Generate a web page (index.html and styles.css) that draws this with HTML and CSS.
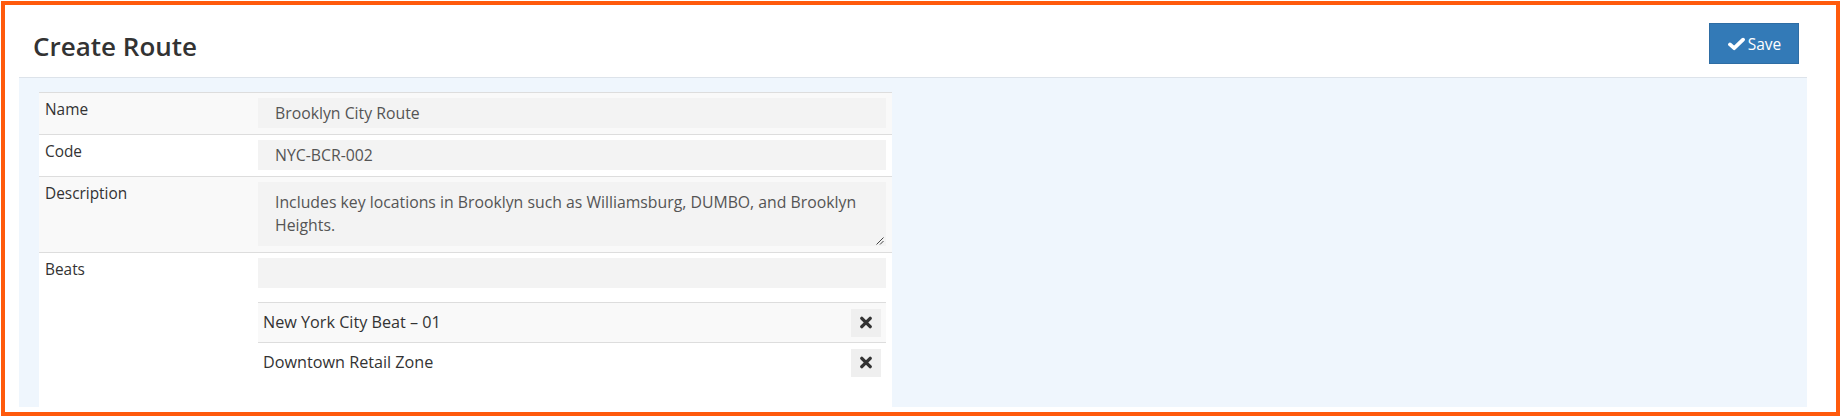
FILE: index.html
```html
<!DOCTYPE html>
<html lang="en">
<head>
<meta charset="utf-8">
<title>Create Route</title>
<link rel="stylesheet" href="styles.css">
</head>
<body>
<div class="frame">
  <div class="header">
    <h1 class="title">Create Route</h1>
    <button class="btn-save" type="button">
      <svg class="ico-check" viewBox="0 0 20 15" width="19" height="14" aria-hidden="true">
        <polyline points="3,8 7.5,12 17,2.8" fill="none" stroke="#fff" stroke-width="4" stroke-linecap="round" stroke-linejoin="round"/>
      </svg>
      <span>Save</span>
    </button>
  </div>
  <div class="panel">
    <div class="form">
      <div class="row striped">
        <div class="label">Name</div>
        <div class="field"><div class="input">Brooklyn City Route</div></div>
      </div>
      <div class="row">
        <div class="label">Code</div>
        <div class="field"><div class="input">NYC-BCR-002</div></div>
      </div>
      <div class="row striped">
        <div class="label">Description</div>
        <div class="field">
          <div class="textarea">Includes key locations in Brooklyn such as Williamsburg, DUMBO, and Brooklyn Heights.
            <svg class="grip" viewBox="0 0 9 9" width="9" height="9" aria-hidden="true">
              <line x1="8.5" y1="1.5" x2="1.5" y2="8.5" stroke="#444" stroke-width="1"/>
              <line x1="8.5" y1="5" x2="5" y2="8.5" stroke="#444" stroke-width="1"/>
            </svg>
          </div>
        </div>
      </div>
      <div class="row grow">
        <div class="label">Beats</div>
        <div class="field">
          <div class="input"></div>
          <ul class="beats">
            <li class="beat striped">
              <span>New York City Beat – 01</span>
              <button class="btn-remove" type="button" aria-label="Remove">
                <svg viewBox="0 0 14 14" width="14" height="13" aria-hidden="true">
                  <line x1="2.5" y1="2.5" x2="11.5" y2="11.5" stroke="#333" stroke-width="3.6" stroke-linecap="round"/>
                  <line x1="11.5" y1="2.5" x2="2.5" y2="11.5" stroke="#333" stroke-width="3.6" stroke-linecap="round"/>
                </svg>
              </button>
            </li>
            <li class="beat">
              <span>Downtown Retail Zone</span>
              <button class="btn-remove" type="button" aria-label="Remove">
                <svg viewBox="0 0 14 14" width="14" height="13" aria-hidden="true">
                  <line x1="2.5" y1="2.5" x2="11.5" y2="11.5" stroke="#333" stroke-width="3.6" stroke-linecap="round"/>
                  <line x1="11.5" y1="2.5" x2="2.5" y2="11.5" stroke="#333" stroke-width="3.6" stroke-linecap="round"/>
                </svg>
              </button>
            </li>
          </ul>
        </div>
      </div>
    </div>
  </div>
</div>
</body>
</html>
```

FILE: styles.css
```css
* { box-sizing: border-box; }

html, body {
  margin: 0;
  padding: 0;
  background: #ffffff;
}

body {
  font-family: "Open Sans", "Noto Sans", sans-serif;
  font-size: 15.4px;
  color: #333333;
}

.frame {
  margin: 1px 2px 1px 1px;
  height: 415px;
  border: 4px solid #ff5a0c;
  background: #ffffff;
  padding: 0 29px 5px 14px;
  display: flex;
  flex-direction: column;
  overflow: hidden;
}

.header {
  height: 72px;
  flex: 0 0 72px;
  display: flex;
  align-items: flex-start;
  justify-content: space-between;
  padding: 0 8px 0 14px;
}

.title {
  margin: 0;
  padding-top: 24px;
  font-size: 26px;
  font-weight: 600;
  line-height: 34px;
  color: #333333;
}

.btn-save {
  margin-top: 18px;
  width: 90px;
  height: 41px;
  background: #337ab7;
  border: 1px solid #2e6da4;
  color: #ffffff;
  font-family: inherit;
  font-size: 15.5px;
  display: flex;
  align-items: center;
  justify-content: center;
  gap: 2px;
  padding: 0;
  cursor: pointer;
}

.ico-check { display: block; }

.panel {
  flex: 1 1 auto;
  min-height: 0;
  background: #eff6fd;
  border-top: 1px solid #dde3ea;
  padding: 14px 0 0 20px;
  overflow: hidden;
  display: flex;
  flex-direction: column;
}

.form {
  flex: 1 1 auto;
  width: 853px;
  background: #ffffff;
  border-top: 1px solid #dddddd;
  display: flex;
  flex-direction: column;
}

.row {
  display: flex;
  border-bottom: 1px solid #dddddd;
  background: #ffffff;
}

.row.striped { background: #f9f9f9; }

.row.grow {
  flex: 1 1 auto;
  border-bottom: 0;
}

.label {
  width: 219px;
  flex: 0 0 219px;
  padding: 6px 6px 0 6px;
  line-height: 22px;
  color: #333333;
}

.field {
  flex: 1 1 auto;
  padding: 5px 6px 6px 0;
}

.input {
  height: 30px;
  background: #f3f3f3;
  padding: 0 17px;
  line-height: 30px;
  font-size: 15.8px;
  color: #555555;
}

.textarea {
  position: relative;
  height: 64px;
  background: #f3f3f3;
  padding: 9px 17px 0 17px;
  line-height: 23px;
  font-size: 15.8px;
  color: #555555;
}

.grip {
  position: absolute;
  right: 2px;
  bottom: 1px;
}

.beats {
  list-style: none;
  margin: 14px 0 0 0;
  padding: 0;
}

.beat {
  display: flex;
  align-items: center;
  justify-content: space-between;
  height: 40px;
  border-top: 1px solid #dddddd;
  padding: 0 5px;
  font-size: 16.2px;
  line-height: 22px;
  color: #333333;
  background: #ffffff;
}

.beat span { margin-top: -2px; }

.beat.striped { background: #f9f9f9; }

.btn-remove {
  width: 30px;
  height: 28px;
  border: 0;
  background: #efefef;
  padding: 0;
  display: flex;
  align-items: center;
  justify-content: center;
  cursor: pointer;
}
```
